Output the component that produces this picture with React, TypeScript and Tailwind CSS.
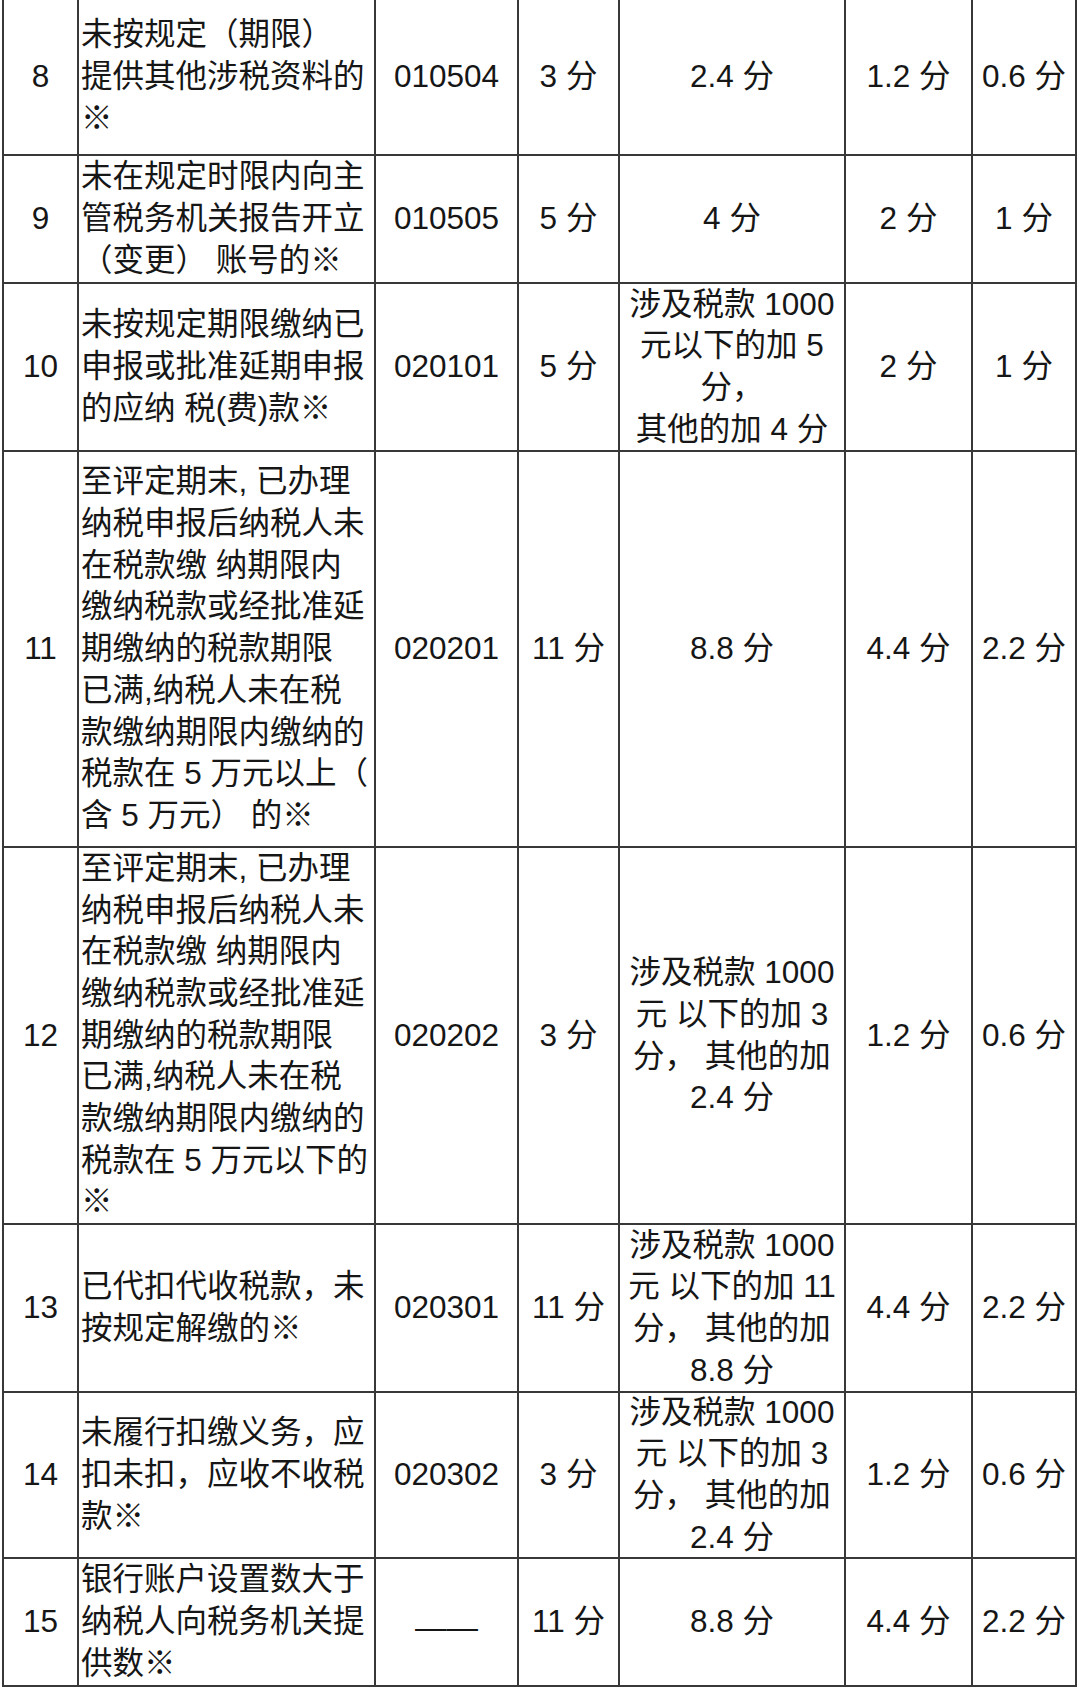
type Row = {
  no: string;
  desc: string[];
  code: string;
  base: string;
  rule: string[];
  mid: string;
  low: string;
};

const longHead = [
  "至评定期末, 已办理",
  "纳税申报后纳税人未",
  "在税款缴 纳期限内",
  "缴纳税款或经批准延",
  "期缴纳的税款期限",
  "已满,纳税人未在税",
  "款缴纳期限内缴纳的",
];

const rows: Row[] = [
  {
    no: "8",
    desc: ["未按规定（期限）", "提供其他涉税资料的", "※"],
    code: "010504",
    base: "3 分",
    rule: ["2.4 分"],
    mid: "1.2 分",
    low: "0.6 分",
  },
  {
    no: "9",
    desc: ["未在规定时限内向主", "管税务机关报告开立", "（变更） 账号的※"],
    code: "010505",
    base: "5 分",
    rule: ["4 分"],
    mid: "2 分",
    low: "1 分",
  },
  {
    no: "10",
    desc: ["未按规定期限缴纳已", "申报或批准延期申报", "的应纳 税(费)款※"],
    code: "020101",
    base: "5 分",
    rule: ["涉及税款 1000", "元以下的加 5", "分，", "其他的加 4 分"],
    mid: "2 分",
    low: "1 分",
  },
  {
    no: "11",
    desc: [...longHead, "税款在 5 万元以上（", "含 5 万元） 的※"],
    code: "020201",
    base: "11 分",
    rule: ["8.8 分"],
    mid: "4.4 分",
    low: "2.2 分",
  },
  {
    no: "12",
    desc: [...longHead, "税款在 5 万元以下的", "※"],
    code: "020202",
    base: "3 分",
    rule: ["涉及税款 1000", "元 以下的加 3", "分， 其他的加", "2.4 分"],
    mid: "1.2 分",
    low: "0.6 分",
  },
  {
    no: "13",
    desc: ["已代扣代收税款，未", "按规定解缴的※"],
    code: "020301",
    base: "11 分",
    rule: ["涉及税款 1000", "元 以下的加 11", "分， 其他的加", "8.8 分"],
    mid: "4.4 分",
    low: "2.2 分",
  },
  {
    no: "14",
    desc: ["未履行扣缴义务，应", "扣未扣，应收不收税", "款※"],
    code: "020302",
    base: "3 分",
    rule: ["涉及税款 1000", "元 以下的加 3", "分， 其他的加", "2.4 分"],
    mid: "1.2 分",
    low: "0.6 分",
  },
  {
    no: "15",
    desc: ["银行账户设置数大于", "纳税人向税务机关提", "供数※"],
    code: "——",
    base: "11 分",
    rule: ["8.8 分"],
    mid: "4.4 分",
    low: "2.2 分",
  },
];

const cell = "bg-white flex items-center justify-center text-center";

export default function App() {
  return (
    <div
      className="w-[1080px] h-[1689px] bg-white text-[#161616] text-[31.5px] leading-[41.7px]"
      style={{ fontFamily: '"Liberation Sans", "Noto Sans CJK SC", sans-serif' }}
    >
      <div className="ml-[2px] w-fit grid grid-cols-[73px_295px_141px_99px_224px_125px_102px] grid-rows-[154px_126px_166px_394px_375px_166px_164px_126px] gap-[2px] bg-[#383838] px-[2px] pb-[2px]">
        {rows.map((r) => (
          <div key={r.no} className="contents">
            <div className={cell}>{r.no}</div>
            <div className="bg-white flex flex-col justify-center pl-[2px]">
              {r.desc.map((line, i) => (
                <div key={i} className="whitespace-pre">
                  {line}
                </div>
              ))}
            </div>
            <div className={cell}>
              {r.code === "——" ? (
                <span className="translate-y-[6px]">——</span>
              ) : (
                r.code
              )}
            </div>
            <div className={cell}>
              <span className="whitespace-pre">{r.base}</span>
            </div>
            <div className={`${cell} flex-col`}>
              {r.rule.map((line, i) => (
                <div key={i} className="whitespace-pre">
                  {line}
                </div>
              ))}
            </div>
            <div className={cell}>
              <span className="whitespace-pre">{r.mid}</span>
            </div>
            <div className={cell}>
              <span className="whitespace-pre">{r.low}</span>
            </div>
          </div>
        ))}
      </div>
    </div>
  );
}
